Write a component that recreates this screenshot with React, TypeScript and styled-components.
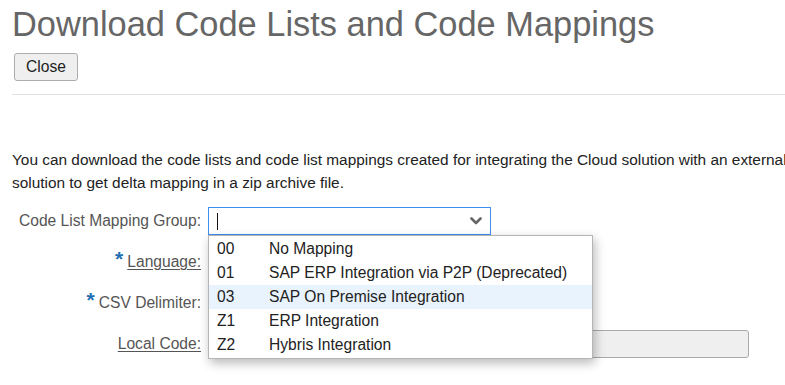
import React, { useState } from 'react';
import styled, { createGlobalStyle } from 'styled-components';

const GlobalStyle = createGlobalStyle`
  html, body {
    margin: 0;
    padding: 0;
    background: #ffffff;
    overflow: hidden;
  }
  body {
    font-family: "Liberation Sans", Arial, sans-serif;
    color: #333;
  }
`;

const Page = styled.div`
  width: 785px;
  height: 385px;
  overflow: hidden;
  padding: 0 0 0 12px;
  box-sizing: border-box;
`;

const Title = styled.h1`
  margin: 0;
  padding-top: 3px;
  font-size: 34.4px;
  font-weight: normal;
  line-height: 42px;
  color: #666666;
  white-space: nowrap;
`;

const Toolbar = styled.div`
  display: flex;
  padding: 8px 0 0 2px;
`;

const Button = styled.button`
  height: 28px;
  padding: 0 11px;
  background: #efefef;
  border: 1px solid #adadad;
  border-radius: 3px;
  font-family: "Liberation Sans", Arial, sans-serif;
  font-size: 15.6px;
  color: #222;
  cursor: pointer;
`;

const Divider = styled.hr`
  margin: 13px 0 0 0;
  border: none;
  border-top: 1px solid #e2e2e2;
`;

const Intro = styled.p`
  margin: 53px 0 0 0;
  font-size: 15.4px;
  line-height: 23px;
  color: #222;
  white-space: nowrap;
`;

const Form = styled.div`
  display: grid;
  grid-template-columns: 189px auto;
  column-gap: 7px;
  row-gap: 13px;
  margin-top: 13px;
  align-items: center;
`;

const Label = styled.label<{ $underline?: boolean }>`
  justify-self: end;
  font-size: 15.6px;
  color: #555;
  text-decoration: ${p => (p.$underline ? 'underline' : 'none')};
  text-underline-offset: 2px;
  white-space: nowrap;
`;

const Required = styled.span`
  color: #1f6fb2;
  font-weight: bold;
  font-size: 21px;
  line-height: 10px;
  margin-right: 4px;
  display: inline-block;
  vertical-align: 1px;
`;

const Field = styled.div<{ $width: number }>`
  position: relative;
  width: ${p => p.$width}px;
  height: 28px;
`;

const Combo = styled.div`
  display: flex;
  align-items: center;
  justify-content: space-between;
  box-sizing: border-box;
  width: 100%;
  height: 28px;
  border: 1px solid #3d8ff2;
  padding: 0 8px 0 8px;
  background: #fff;
`;

const Caret = styled.span`
  width: 1px;
  height: 17px;
  background: #111;
`;

const TextBox = styled.div<{ $disabled?: boolean }>`
  box-sizing: border-box;
  width: 100%;
  height: 28px;
  border: 1px solid #aaaaaa;
  border-radius: 3px;
  background: ${p => (p.$disabled ? '#efefef' : '#fff')};
`;

const Menu = styled.ul`
  position: absolute;
  top: 28px;
  left: 0;
  z-index: 10;
  width: 385px;
  margin: 0;
  padding: 1px 0;
  list-style: none;
  box-sizing: border-box;
  background: #fff;
  border: 1px solid #b5b5b5;
  box-shadow: 2px 4px 10px rgba(0, 0, 0, 0.28);
`;

const Option = styled.li<{ $active?: boolean }>`
  display: flex;
  height: 24px;
  align-items: center;
  padding-left: 8px;
  font-size: 15.6px;
  color: #222;
  background: ${p => (p.$active ? '#e9f3fd' : 'transparent')};
`;

const Code = styled.span`
  width: 52px;
`;

const options = [
  { code: '00', name: 'No Mapping' },
  { code: '01', name: 'SAP ERP Integration via P2P (Deprecated)' },
  { code: '03', name: 'SAP On Premise Integration' },
  { code: 'Z1', name: 'ERP Integration' },
  { code: 'Z2', name: 'Hybris Integration' },
];

const Chevron = () => (
  <svg width="12" height="8" viewBox="0 0 12 8">
    <path d="M1.5 1.5 L6 6 L10.5 1.5" fill="none" stroke="#666" strokeWidth="2.6" strokeLinecap="round" strokeLinejoin="round" />
  </svg>
);

const App: React.FC = () => {
  const [active] = useState('03');

  return (
    <Page>
      <GlobalStyle />
      <Title>Download Code Lists and Code Mappings</Title>
      <Toolbar>
        <Button>Close</Button>
      </Toolbar>
      <Divider />
      <Intro>
        You can download the code lists and code list mappings created for integrating the Cloud solution with an external
        <br />
        solution to get delta mapping in a zip archive file.
      </Intro>
      <Form>
        <Label>Code List Mapping Group:</Label>
        <Field $width={283}>
          <Combo>
            <Caret />
            <Chevron />
          </Combo>
          <Menu>
            {options.map(o => (
              <Option key={o.code} $active={o.code === active}>
                <Code>{o.code}</Code>
                {o.name}
              </Option>
            ))}
          </Menu>
        </Field>

        <Label $underline>
          <Required>*</Required>Language:
        </Label>
        <Field $width={283}>
          <TextBox />
        </Field>

        <Label>
          <Required>*</Required>CSV Delimiter:
        </Label>
        <Field $width={283}>
          <TextBox />
        </Field>

        <Label $underline>Local Code:</Label>
        <Field $width={541}>
          <TextBox $disabled />
        </Field>
      </Form>
    </Page>
  );
};

export default App;
